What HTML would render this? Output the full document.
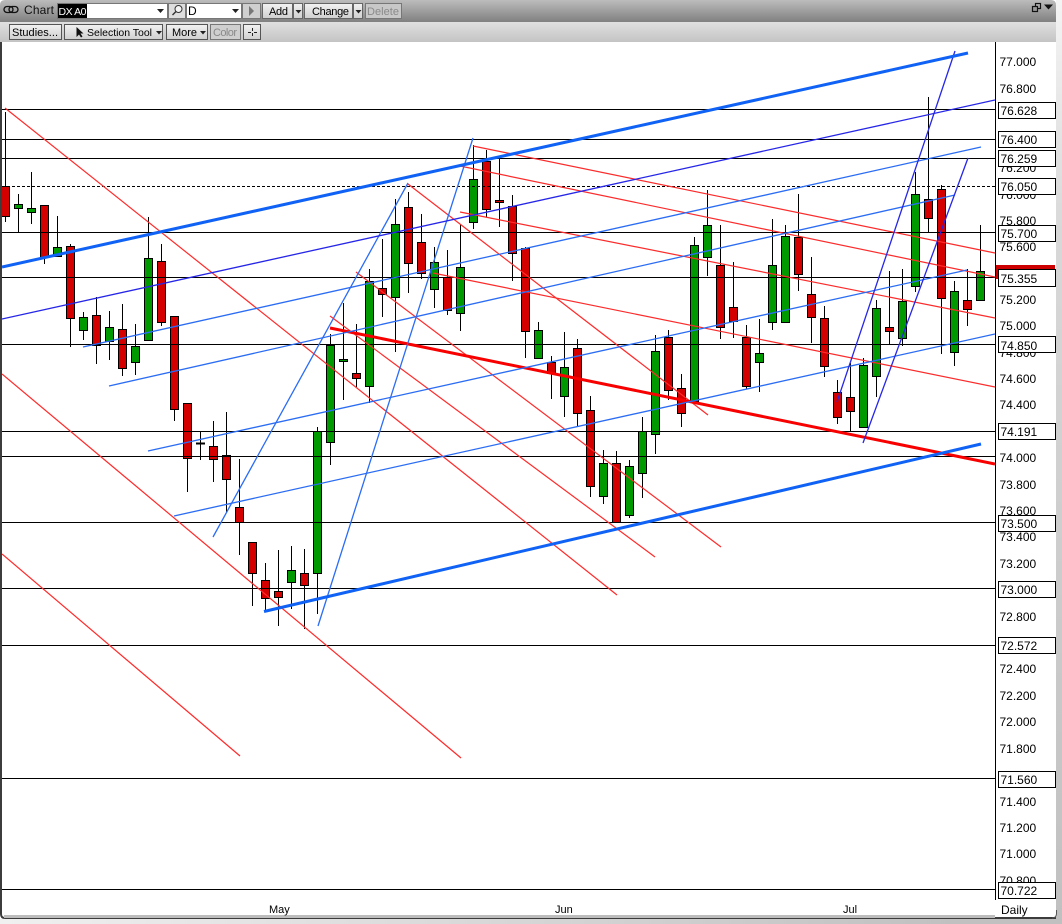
<!DOCTYPE html>
<html><head><meta charset="utf-8"><title>Chart</title>
<style>
html,body{margin:0;padding:0;background:#fff;width:1062px;height:924px;overflow:hidden}
svg{display:block;font-family:"Liberation Sans",sans-serif}
text{font-size:12px;fill:#000}
.t{font-size:11px}
</style></head><body>
<svg width="1062" height="924" viewBox="0 0 1062 924" xmlns="http://www.w3.org/2000/svg">
<defs>
<linearGradient id="g1" x1="0" y1="0" x2="0" y2="1"><stop offset="0" stop-color="#bcbcbc"/><stop offset="1" stop-color="#808080"/></linearGradient>
<linearGradient id="g2" x1="0" y1="0" x2="0" y2="1"><stop offset="0" stop-color="#e0e0e0"/><stop offset="1" stop-color="#c4c4c4"/></linearGradient>
<linearGradient id="g3" x1="0" y1="0" x2="0" y2="1"><stop offset="0" stop-color="#f2f2f2"/><stop offset="1" stop-color="#cfcfcf"/></linearGradient>
<linearGradient id="gs" x1="0" y1="0" x2="0" y2="1"><stop offset="0" stop-color="#f4f4f4"/><stop offset="0.25" stop-color="#d8d8d8"/><stop offset="1" stop-color="#c0c0c0"/></linearGradient>
<linearGradient id="gb" x1="0" y1="0" x2="1" y2="0"><stop offset="0" stop-color="#f0f0f0"/><stop offset="0.9" stop-color="#c0c0c0"/><stop offset="1" stop-color="#c0c0c0"/></linearGradient>
<clipPath id="plot"><rect x="2" y="42" width="993" height="858"/></clipPath>
</defs>

<!-- outer shadow -->
<rect x="1056" y="0" width="6" height="924" fill="url(#gs)"/>
<rect x="0" y="919" width="1062" height="5" fill="url(#gb)"/>
<!-- panel -->
<rect x="0" y="42" width="1056" height="876" fill="#fff"/>
<!-- toolbar -->
<path d="M0 22V5Q0 0 5 0H1051Q1056 0 1056 5V22Z" fill="url(#g1)"/>
<rect x="0" y="22" width="1056" height="20" fill="url(#g2)"/>
<!-- borders -->
<path d="M1 42V914Q1 918 5 918H1056" fill="none" stroke="#3c3c3c" stroke-width="2"/>
<rect x="4" y="915" width="991" height="3" fill="#bdbdbd"/>
<path d="M1056.5 910V914Q1056 918 1052 918" fill="none" stroke="#555" stroke-width="1"/>

<!-- toolbar row 1 -->
<g fill="none" stroke="#111" stroke-width="1.3">
<rect x="4" y="6.5" width="9" height="6" rx="3"/><rect x="9" y="6.5" width="9" height="6" rx="3"/>
</g>
<text class="t" x="24" y="14" textLength="30" style="fill:#111;font-size:12px">Chart</text>
<rect x="57.5" y="3.5" width="110" height="15" fill="#fff" stroke="#777"/>
<rect x="58" y="4" width="29" height="14" fill="#000"/>
<text x="58.5" y="15" textLength="28" style="fill:#fff;font-size:10.5px">DX A0</text>
<path d="M157 9h7l-3.500 4z" fill="#222"/>
<rect x="168.500" y="3.500" width="17" height="15" fill="#ddd" stroke="#777"/>
<circle cx="178.500" cy="9" r="3.500" fill="#f4f4f4" stroke="#333"/>
<path d="M176 11.500l-3.500 3.500" stroke="#333" stroke-width="1.400"/>
<rect x="186.500" y="3.500" width="55" height="15" fill="#fff" stroke="#777"/>
<text x="188" y="15">D</text>
<path d="M232 9h7l-3.500 4z" fill="#222"/>
<rect x="242.500" y="3.500" width="18" height="15" fill="#cfcfcf" stroke="#777"/>
<path d="M249 6l5 5-5 5z" fill="#777"/>
<rect x="262.500" y="3.500" width="30" height="15" fill="url(#g3)" stroke="#666"/>
<text class="t" x="269" y="15" textLength="19">Add</text>
<rect x="293.500" y="3.500" width="9" height="15" fill="url(#g3)" stroke="#666"/>
<path d="M295.500 10h6l-3 3.500z" fill="#222"/>
<rect x="304.500" y="3.500" width="48" height="15" fill="url(#g3)" stroke="#666"/>
<text class="t" x="312" y="15" textLength="37">Change</text>
<rect x="353.500" y="3.500" width="9" height="15" fill="url(#g3)" stroke="#666"/>
<path d="M355.500 10h6l-3 3.500z" fill="#222"/>
<rect x="365.500" y="3.500" width="36" height="15" fill="#c8c8c8" stroke="#777"/>
<text class="t" x="367" y="15" textLength="32" style="fill:#8a8a8a">Delete</text>

<!-- toolbar row 2 -->
<rect x="9.500" y="24.500" width="52" height="15" fill="url(#g3)" stroke="#555"/>
<text class="t" x="12" y="36" textLength="46">Studies...</text>
<rect x="64.500" y="24.500" width="98" height="15" fill="url(#g3)" stroke="#555"/>
<path d="M76.500 27v10l2.500-2.500 2 3 1.500-1-2-3h3z" fill="#111"/>
<text x="87" y="36" textLength="65" style="font-size:10.5px">Selection Tool</text>
<path d="M156 31h6l-3 3.500z" fill="#222"/>
<rect x="166.500" y="24.500" width="41" height="15" fill="url(#g3)" stroke="#555"/>
<text class="t" x="172" y="36" textLength="25">More</text>
<path d="M200 31h6l-3 3.500z" fill="#222"/>
<rect x="210.500" y="24.500" width="30" height="15" fill="#cfcfcf" stroke="#777"/>
<text class="t" x="213" y="36" textLength="24" style="fill:#8a8a8a">Color</text>
<rect x="243.500" y="24.500" width="17" height="15" fill="url(#g3)" stroke="#555"/>
<path d="M252.500 28v3M252.500 33v3M248 32.500h3M254 32.500h3" stroke="#222" fill="none"/>

<!-- window icons top right -->
<g fill="none" stroke="#111" stroke-width="1.200">
<rect x="1035.500" y="3.500" width="5" height="5"/><rect x="1032.500" y="6.500" width="5" height="5" fill="#999"/>
</g>
<path d="M1044 4.500h9l-4.500 5z" fill="#111"/>

<g clip-path="url(#plot)">
<!-- wicks -->
<path stroke="#000" stroke-width="1" fill="none" d="M5.500 112V222M18.500 194V232M31.500 172V224M44.500 205V264M57.500 216V256M70.500 244V347M83.500 312V340M96.500 297V364M109.500 311V360M122.500 304V376M135.500 324V375M148.500 217V340M161.500 244V326M174.500 316V421M187.500 403V492M200.500 431V460M213.500 421V482M226.500 412V513M239.500 459V555M252.500 542V606M265.500 563V612M278.500 550V626M291.500 546V609M304.500 549V629M317.500 427V614M330.500 334V465M343.500 303V400M356.500 324V387M369.500 269V403M382.500 239V317M395.500 199V352M408.500 192V293M421.500 214V279M434.500 247V308M447.500 250V315M460.500 224V331M473.500 145V229M486.500 150V217M499.500 158V227M512.500 195V281M525.500 247V358M538.500 322V358M551.500 356V399M564.500 332V417M577.500 339V427M590.500 396V497M603.500 450V504M616.500 451V522M629.500 460V518M642.500 417V498M655.500 335V454M668.500 330V400M681.500 374V427M694.500 237V403M707.500 190V276M720.500 225V339M733.500 262V338M746.500 325V389M759.500 319V392M772.500 219V330M785.500 225V322M798.500 194V291M811.500 257V343M824.500 306V377M837.500 380V424M850.500 363V431M863.500 358V427M876.500 300V397M889.500 271V344M902.500 269V346M915.500 172V292M928.500 97V232M941.500 185V354M954.500 281V366M967.500 269V326M980.500 225V300"/>
<!-- red bodies -->
<path fill="#d40000" stroke="#000" stroke-width="1" d="M1.500 186.500h8v30h-8zM40.500 205.500h8v52h-8zM66.500 246.500h8v72h-8zM92.500 315.500h8v30h-8zM118.500 329.500h8v39h-8zM157.500 261.500h8v61h-8zM170.500 316.500h8v93h-8zM183.500 403.500h8v55h-8zM209.500 446.500h8v13h-8zM222.500 455.500h8v24h-8zM235.500 507.500h8v15h-8zM248.500 542.500h8v31h-8zM261.500 580.500h8v18h-8zM274.500 591.500h8v6h-8zM300.500 573.500h8v12h-8zM352.500 373.500h8v5h-8zM378.500 288.500h8v6h-8zM404.500 207.500h8v56h-8zM417.500 242.500h8v31h-8zM443.500 277.500h8v33h-8zM482.500 161.500h8v48h-8zM495.500 200.500h8v2h-8zM508.500 206.500h8v47h-8zM521.500 248.500h8v83h-8zM547.500 362.500h8v11h-8zM573.500 348.500h8v65h-8zM586.500 410.500h8v76h-8zM612.500 463.500h8v59h-8zM664.500 337.500h8v53h-8zM677.500 388.500h8v25h-8zM716.500 265.500h8v62h-8zM729.500 307.500h8v14h-8zM742.500 337.500h8v49h-8zM794.500 237.500h8v37h-8zM807.500 294.500h8v23h-8zM820.500 318.500h8v48h-8zM833.500 392.500h8v25h-8zM846.500 397.500h8v14h-8zM885.500 327.500h8v4h-8zM924.500 199.500h8v19h-8zM937.500 189.500h8v109h-8zM963.500 300.500h8v9h-8z"/>
<!-- green bodies -->
<path fill="#009a00" stroke="#000" stroke-width="1" d="M14.500 204.500h8v4h-8zM27.500 208.500h8v4h-8zM53.500 247.500h8v9h-8zM79.500 317.500h8v13h-8zM105.500 327.500h8v14h-8zM131.500 346.500h8v16h-8zM144.500 258.500h8v82h-8zM287.500 570.500h8v12h-8zM313.500 431.500h8v142h-8zM326.500 345.500h8v97h-8zM339.500 359.500h8v2h-8zM365.500 281.500h8v105h-8zM391.500 224.500h8v73h-8zM430.500 262.500h8v27h-8zM456.500 267.500h8v46h-8zM469.500 179.500h8v43h-8zM534.500 330.500h8v28h-8zM560.500 367.500h8v29h-8zM599.500 463.500h8v33h-8zM625.500 466.500h8v49h-8zM638.500 431.500h8v42h-8zM651.500 351.500h8v83h-8zM690.500 245.500h8v156h-8zM703.500 225.500h8v32h-8zM755.500 353.500h8v9h-8zM768.500 265.500h8v57h-8zM781.500 236.500h8v86h-8zM859.500 365.500h8v62h-8zM872.500 308.500h8v68h-8zM898.500 301.500h8v37h-8zM911.500 194.500h8v92h-8zM950.500 291.500h8v61h-8zM976.500 271.500h8v29h-8z"/>
<rect x="196" y="442.500" width="9" height="2" fill="#000"/>

<!-- horizontal levels -->
<path stroke="#000" stroke-width="1" fill="none" d="M2 109.500H995M2 139.500H995M2 158.500H995M2 232.500H995M2 277.500H995M2 344.500H995M2 431.500H995M2 456.500H995M2 522.500H995M2 588.500H995M2 645.500H995M2 778.500H995M2 889.500H995M2 900.500H995"/>
<path stroke="#000" stroke-width="1" stroke-dasharray="3 2" fill="none" d="M2 186.500H995"/>

<!-- red fan -->
<g stroke="#ff2a2a" stroke-width="1.200" fill="none">
<path d="M5 108L617 595"/><path d="M2 374L461 758"/><path d="M2 554L240 756"/>
<path d="M408 184L708 415"/><path d="M356 272L721 547"/><path d="M330 316L655 557"/>
<path d="M473 146L995 253"/><path d="M460 166L995 277"/><path d="M460 212L995 318"/><path d="M433 273L995 387"/>
</g>
<path d="M330 328L995 464" stroke="#f80000" stroke-width="3" fill="none"/>

<!-- blue lines -->
<g stroke="#2a6cf5" stroke-width="1.300" fill="none">
<path d="M83 347L981 147"/><path d="M109 386L955 195"/><path d="M148 451L967 270"/><path d="M174 516L995 334"/>
<path d="M213 537L408 183"/><path d="M318 626L473 138"/>
</g>
<g stroke="#2626e8" stroke-width="1.300" fill="none">
<path d="M2 319L995 100"/><path d="M837 402L955 51"/><path d="M863 443L968 158"/>
</g>
<path d="M2 267L968 53" stroke="#0f62f5" stroke-width="3" fill="none"/>
<path d="M264 611.500L981 444" stroke="#0f62f5" stroke-width="3" fill="none"/>
</g>

<!-- price axis -->
<path d="M995.500 42V900" stroke="#000" stroke-width="1"/>
<g>
<text x="999.500" y="66">77.000</text>
<text x="999.500" y="93">76.800</text>
<text x="999.500" y="172">76.200</text>
<text x="999.500" y="199">76.000</text>
<text x="999.500" y="225">75.800</text>
<text x="999.500" y="251">75.600</text>
<text x="999.500" y="304">75.200</text>
<text x="999.500" y="330">75.000</text>
<text x="999.500" y="357">74.800</text>
<text x="999.500" y="383">74.600</text>
<text x="999.500" y="409">74.400</text>
<text x="999.500" y="462">74.000</text>
<text x="999.500" y="489">73.800</text>
<text x="999.500" y="515">73.600</text>
<text x="999.500" y="541">73.400</text>
<text x="999.500" y="568">73.200</text>
<text x="999.500" y="621">72.800</text>
<text x="999.500" y="673">72.400</text>
<text x="999.500" y="700">72.200</text>
<text x="999.500" y="726">72.000</text>
<text x="999.500" y="753">71.800</text>
<text x="999.500" y="806">71.400</text>
<text x="999.500" y="832">71.200</text>
<text x="999.500" y="858">71.000</text>
<text x="999.500" y="885">70.800</text>
</g>
<rect x="997" y="265" width="58" height="6" fill="#cc0000"/>
<rect x="996" y="265" width="2" height="14" fill="#cc0000"/>
<g fill="#fff" stroke="#000" stroke-width="1">
<rect x="998.500" y="102.500" width="57" height="16"/>
<rect x="998.500" y="131.500" width="57" height="16"/>
<rect x="998.500" y="150.500" width="57" height="16"/>
<rect x="998.500" y="178.500" width="57" height="16"/>
<rect x="998.500" y="225.500" width="57" height="16"/>
<rect x="998.500" y="269.500" width="57" height="17"/>
<rect x="998.500" y="336.500" width="57" height="16"/>
<rect x="998.500" y="423.500" width="57" height="16"/>
<rect x="998.500" y="515.500" width="57" height="16"/>
<rect x="998.500" y="581.500" width="57" height="16"/>
<rect x="998.500" y="637.500" width="57" height="16"/>
<rect x="998.500" y="771.500" width="57" height="16"/>
<rect x="998.500" y="882.500" width="57" height="16"/>
</g>
<g>
<text x="1000.500" y="115">76.628</text>
<text x="1000.500" y="144">76.400</text>
<text x="1000.500" y="163">76.259</text>
<text x="1000.500" y="191">76.050</text>
<text x="1000.500" y="238">75.700</text>
<text x="1000.500" y="283">75.355</text>
<text x="1000.500" y="350">74.850</text>
<text x="1000.500" y="436">74.191</text>
<text x="1000.500" y="528">73.500</text>
<text x="1000.500" y="594">73.000</text>
<text x="1000.500" y="650">72.572</text>
<text x="1000.500" y="784">71.560</text>
<text x="1000.500" y="895">70.722</text>
</g>
<!-- time axis -->
<text x="269" y="913" style="font-size:11px">May</text>
<text x="555" y="913" style="font-size:11px">Jun</text>
<text x="843" y="913" style="font-size:11px">Jul</text>
<text x="1001" y="914">Daily</text>
</svg>
</body></html>
